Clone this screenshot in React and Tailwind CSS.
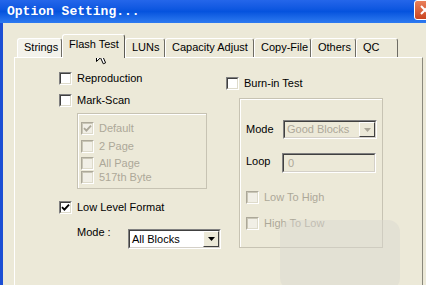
import React from "react";

const uiFont = { fontFamily: '"Liberation Sans", Arial, sans-serif' };
const titleFont = { fontFamily: '"Liberation Mono", "DejaVu Sans Mono", monospace' };

const tabs = [
  { label: "Strings", w: "w-[45px]", tone: "bg-[#f3f2eb]" },
  { label: "Flash Test", w: "w-[63px]", active: true },
  { label: "LUNs", w: "w-[40px]" },
  { label: "Capacity Adjust", w: "w-[89px]" },
  { label: "Copy-File", w: "w-[57px]" },
  { label: "Others", w: "w-[45px]" },
  { label: "QC", w: "w-[42px]" },
];

function CheckBox({ checked, disabled }) {
  return (
    <div
      className={`w-[13px] h-[13px] shrink-0 border border-r-white border-b-white ${
        disabled ? "border-t-[#aca899] border-l-[#aca899]" : "border-t-[#808080] border-l-[#808080]"
      }`}
    >
      <div
        className={`w-full h-full flex items-center justify-center border border-r-[#dedbcb] border-b-[#dedbcb] ${
          disabled
            ? "border-t-[#c9c6b6] border-l-[#c9c6b6] bg-[#f1efe6]"
            : "border-t-[#404040] border-l-[#404040] bg-white"
        }`}
      >
        {checked && (
          <svg width="9" height="9" viewBox="0 0 9 9">
            <path
              d="M1 4.2 L3.4 6.6 L8 1.6"
              fill="none"
              stroke={disabled ? "#aca899" : "#000"}
              strokeWidth="1.9"
            />
          </svg>
        )}
      </div>
    </div>
  );
}

function Row({ label, checked, disabled, className = "" }) {
  return (
    <div className={`flex items-center gap-[5px] h-[13px] ${className}`}>
      <CheckBox checked={checked} disabled={disabled} />
      <span className={`leading-[13px] whitespace-nowrap ${disabled ? "text-[#aca899]" : "text-black"}`}>
        {label}
      </span>
    </div>
  );
}

function Arrow({ disabled }) {
  return (
    <div className="w-[16px] h-full shrink-0 flex items-center justify-center bg-[#ece9d8] border border-t-white border-l-white border-r-[#404040] border-b-[#404040]">
      <svg width="7" height="4" viewBox="0 0 7 4">
        <polygon points="0,0 7,0 3.5,4" fill={disabled ? "#aca899" : "#000"} />
      </svg>
    </div>
  );
}

function Select({ value, disabled, className = "" }) {
  return (
    <div className={`flex border border-t-[#808080] border-l-[#808080] border-r-white border-b-white ${className}`}>
      <div
        className={`flex-1 flex items-stretch border border-t-[#404040] border-l-[#404040] border-r-[#d4d0c8] border-b-[#d4d0c8] ${
          disabled ? "bg-[#ece9d8] text-[#aca899]" : "bg-white text-black"
        }`}
      >
        <span className="flex-1 flex items-center pl-[2px] whitespace-nowrap">{value}</span>
        <Arrow disabled={disabled} />
      </div>
    </div>
  );
}

function TitleBar() {
  return (
    <div className="h-[23px] shrink-0 flex items-start bg-linear-to-b from-[#2466ea] via-[#0553de] to-[#2d7af0]">
      <span className="ml-[7px] mt-[4px] text-white font-bold text-[13px] leading-[15px]" style={titleFont}>
        Option Setting...
      </span>
      <div className="ml-auto mr-[-10px] w-[22px] h-[20px] rounded-[3px] border border-white bg-linear-to-b from-[#e9805a] to-[#c9441f] flex items-center justify-center">
        <svg width="10" height="10" viewBox="0 0 10 10">
          <path d="M1 1 L9 9 M9 1 L1 9" stroke="#fff" strokeWidth="2" />
        </svg>
      </div>
    </div>
  );
}

export default function App() {
  return (
    <div className="w-[426px] h-[285px] overflow-hidden relative flex flex-col bg-[#ece9d8] text-[11px] text-black" style={uiFont}>
      <TitleBar />

      <div className="flex-1 flex flex-col border-l-[3px] border-l-[#1c4fd4] pl-[11px] pt-[11px] pr-[3px]">
        {/* tab strip */}
        <div className="flex items-end h-[23px] ml-[3px]">
          {tabs.map((t) =>
            t.active ? (
              <div
                key={t.label}
                className={`${t.w} h-[24px] -mb-[1px] relative z-10 bg-[#ece9d8] pl-[6px] pt-[3px] leading-[13px] border-t border-l border-t-white border-l-white border-r border-r-[#5c5b55] rounded-t-[3px] whitespace-nowrap`}
              >
                {t.label}
              </div>
            ) : (
              <div
                key={t.label}
                className={`${t.w} ${t.tone || ""} h-[19px] pl-[6px] pt-[2px] leading-[13px] border-t border-l border-t-white border-l-white border-r border-r-[#6e6c64] rounded-t-[3px] whitespace-nowrap`}
              >
                {t.label}
              </div>
            )
          )}
        </div>

        {/* tab page */}
        <div className="flex-1 flex border-t border-l border-t-white border-l-white border-r border-r-[#8a887c]">
          {/* left column */}
          <div className="w-[211px] shrink-0 pl-[44px] pt-[14px] flex flex-col">
            <Row label="Reproduction" />
            <Row label="Mark-Scan" className="mt-[9px]" />
            <div className="ml-[18px] mt-[6px] w-[130px] border border-[#c7c3b3] shadow-[inset_1px_1px_0_#fff] pl-[3px] pt-[8px] pb-[4px] flex flex-col">
              <Row label="Default" checked disabled />
              <Row label="2 Page" disabled className="mt-[5px]" />
              <Row label="All Page" disabled className="mt-[4px]" />
              <Row label="517th Byte" disabled className="mt-[1px]" />
            </div>
            <Row label="Low Level Format" checked className="mt-[12px]" />
            <div className="flex items-start mt-[12px] ml-[18px]">
              <span className="w-[51px] leading-[13px]">Mode :</span>
              <Select value="All Blocks" className="mt-[3px] w-[93px] h-[20px]" />
            </div>
          </div>

          {/* right column */}
          <div className="pt-[19px] flex flex-col">
            <Row label="Burn-in Test" />
            <div className="ml-[13px] mt-[8px] w-[144px] h-[150px] border border-[#c7c3b3] shadow-[inset_1px_1px_0_#fff] pl-[6px] pt-[21px] flex flex-col">
              <div className="flex items-center">
                <span className="w-[37px] leading-[13px]">Mode</span>
                <Select value="Good Blocks" disabled className="w-[94px] h-[19px]" />
              </div>
              <div className="flex items-start mt-[14px]">
                <span className="w-[36px] mt-[2px] leading-[13px]">Loop</span>
                <div className="w-[94px] h-[20px] flex border border-t-[#808080] border-l-[#808080] border-r-white border-b-white">
                  <div className="flex-1 flex items-center pl-[4px] text-[#aca899] bg-[#ece9d8] border border-t-[#404040] border-l-[#404040] border-r-[#d4d0c8] border-b-[#d4d0c8]">
                    0
                  </div>
                </div>
              </div>
              <Row label="Low To High" disabled className="mt-[18px]" />
              <Row label="High To Low" disabled className="mt-[13px]" />
            </div>
          </div>
        </div>
      </div>

      {/* blurred watermark */}
      <div className="absolute left-[280px] top-[220px] w-[120px] h-[70px] rounded-[12px] bg-[#d9d8d0]/45" />

      {/* mouse pointer */}
      <svg className="absolute left-[96px] top-[45px]" width="13" height="20" viewBox="0 0 13 20">
        <path
          d="M0.5 0.5 L0.5 16.5 L4.5 12.7 L7.3 18.8 L9.6 17.8 L6.9 11.8 L11.8 11.8 Z"
          fill="#fff"
          stroke="#000"
          strokeWidth="1"
          strokeLinejoin="round"
        />
      </svg>
    </div>
  );
}
